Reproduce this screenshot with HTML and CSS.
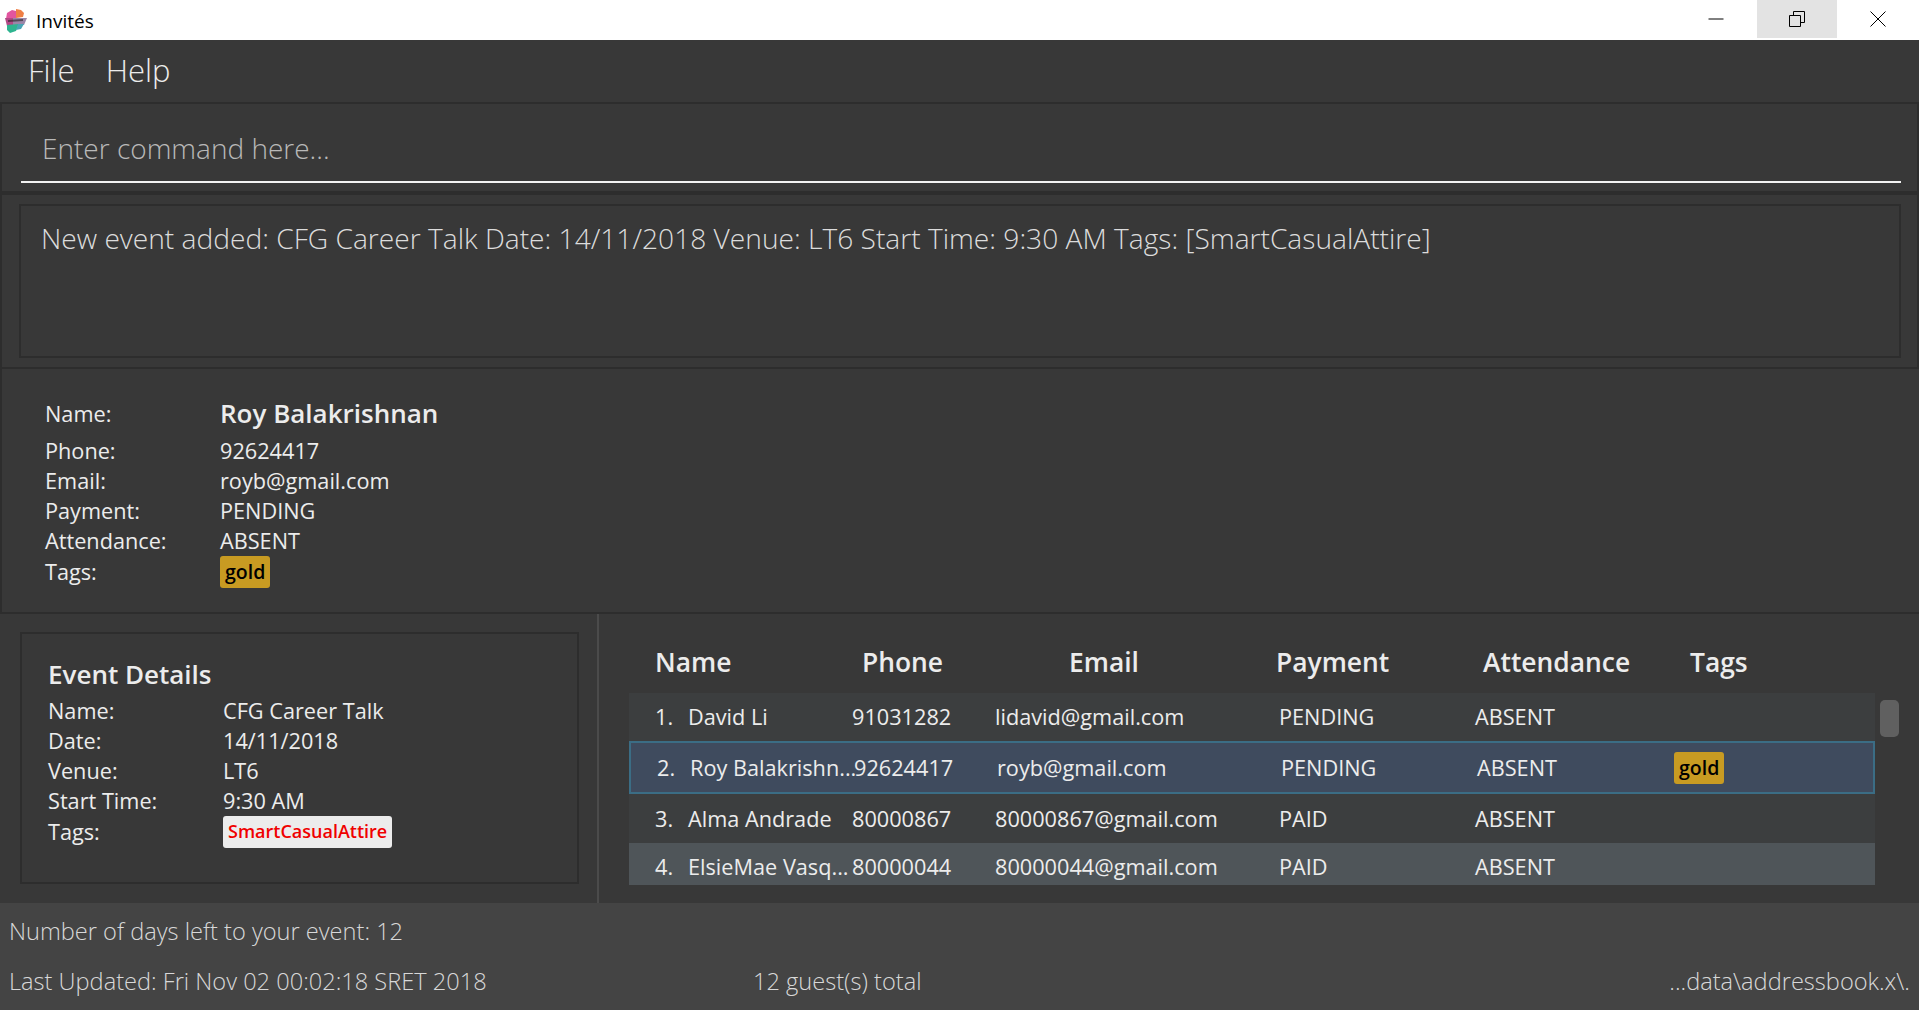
FILE: index.html
```html
<!DOCTYPE html>
<html lang="en">
<head>
    <meta charset="UTF-8">
    <title>Invités</title>
    <link rel="stylesheet" href="styles.css">
</head>
<body>
    <div class="titlebar">
        <svg class="app-icon" width="24" height="26" viewBox="0 0 24 26">
            <defs><filter id="soft"><feGaussianBlur stdDeviation="0.6"/></filter></defs>
            <g filter="url(#soft)">
                <path d="M3 5 L8 2 L12 3 L12 11 L2 11 Z" fill="#e2559f"/>
                <path d="M12 1 L17 2 L20 5 L19 9 L12 10 Z" fill="#ef7f45"/>
                <path d="M1 10 L9 10 L9 18 L3 18 Z" fill="#b24a86"/>
                <path d="M9 10 L23 10 L20 17 L9 17 Z" fill="#9a86a8"/>
                <path d="M3 17 L15 16 L12 23 L6 25 L3 22 Z" fill="#2fb48f"/>
                <path d="M14 16 L20 16 L17 21 L12 22 Z" fill="#4aa5b5"/>
            </g>
            <path d="M4 12 L19 11 L19 13 L4 14 Z" fill="#2f282c" opacity="0.65"/>
        </svg>
        <span class="app-title">Invités</span>
        <div class="win-buttons">
            <div class="win-btn win-btn-min">
                <svg width="16" height="16" viewBox="0 0 16 16"><path d="M0.5 8H15.5" stroke="#000" stroke-width="1" fill="none"/></svg>
            </div>
            <div class="win-btn win-btn-hover">
                <svg width="16" height="16" viewBox="0 0 16 16"><path d="M0.5 4.5H11.5V15.5H0.5Z M4.5 4.5V0.5H15.5V11.5H11.5" stroke="#000" stroke-width="1" fill="none"/></svg>
            </div>
            <div class="win-btn win-btn-close">
                <svg width="16" height="16" viewBox="0 0 16 16"><path d="M0.5 0.5L15.5 15.5M15.5 0.5L0.5 15.5" stroke="#000" stroke-width="1" fill="none"/></svg>
            </div>
        </div>
    </div>

    <div class="menubar">
        <span>File</span>
        <span>Help</span>
    </div>

    <div class="command-panel">
        <div class="command-box">Enter command here...</div>
    </div>

    <div class="result-panel">
        <div class="result-box">New event added: CFG Career Talk Date: 14/11/2018 Venue: LT6 Start Time: 9:30 AM Tags: [SmartCasualAttire]</div>
    </div>

    <div class="person-panel">
        <div class="detail-row name-row"><span class="label">Name:</span><span class="person-name">Roy Balakrishnan</span></div>
        <div class="detail-row"><span class="label">Phone:</span><span>92624417</span></div>
        <div class="detail-row"><span class="label">Email:</span><span>royb@gmail.com</span></div>
        <div class="detail-row"><span class="label">Payment:</span><span>PENDING</span></div>
        <div class="detail-row"><span class="label">Attendance:</span><span>ABSENT</span></div>
        <div class="detail-row tags-row"><span class="label">Tags:</span><span class="tag tag-gold">gold</span></div>
    </div>

    <div class="lower">
        <div class="event-col">
            <div class="event-box">
                <h3>Event Details</h3>
                <div class="detail-row"><span class="label">Name:</span><span>CFG Career Talk</span></div>
                <div class="detail-row"><span class="label">Date:</span><span>14/11/2018</span></div>
                <div class="detail-row"><span class="label">Venue:</span><span>LT6</span></div>
                <div class="detail-row"><span class="label">Start Time:</span><span>9:30 AM</span></div>
                <div class="detail-row tags-row"><span class="label">Tags:</span><span class="tag tag-white">SmartCasualAttire</span></div>
            </div>
        </div>

        <div class="guest-col">
            <div class="guest-head">
                <span>Name</span><span>Phone</span><span>Email</span><span>Payment</span><span>Attendance</span><span>Tags</span>
            </div>
            <div class="guest-list">
                <div class="guest-row row-1">
                    <span>1.</span><span>David Li</span><span>91031282</span><span>lidavid@gmail.com</span><span>PENDING</span><span>ABSENT</span><span></span>
                </div>
                <div class="guest-row row-2 selected">
                    <span>2.</span><span>Roy Balakrishn...</span><span>92624417</span><span>royb@gmail.com</span><span>PENDING</span><span>ABSENT</span><span class="tag tag-gold">gold</span>
                </div>
                <div class="guest-row row-3">
                    <span>3.</span><span>Alma Andrade</span><span>80000867</span><span>80000867@gmail.com</span><span>PAID</span><span>ABSENT</span><span></span>
                </div>
                <div class="guest-row row-4 hovered">
                    <span>4.</span><span>ElsieMae Vasq...</span><span>80000044</span><span>80000044@gmail.com</span><span>PAID</span><span>ABSENT</span><span></span>
                </div>
            </div>
            <div class="scroll-thumb"></div>
        </div>
    </div>

    <div class="statusbar">
        <div class="status-line">Number of days left to your event: 12</div>
        <div class="status-line status-bottom">
            <span>Last Updated: Fri Nov 02 00:02:18 SRET 2018</span>
            <span>12 guest(s) total</span>
            <span>...data\addressbook.x\.</span>
        </div>
    </div>
</body>
</html>
```

FILE: styles.css
```css
* {
    box-sizing: border-box;
}
html, body {
    margin: 0;
    height: 1010px;
    overflow: hidden;
}
body {
    font-family: "Open Sans", "Noto Sans", sans-serif;
    background-color: #383838;
    color: #ececec;
}

/* window chrome */
.titlebar {
    height: 40px;
    background: #fff;
    display: flex;
    align-items: flex-start;
    color: #000;
}
.app-icon {
    margin: 8px 0 0 4px;
}
.app-title {
    margin-left: 8px;
    font-size: 19px;
    line-height: 42px;
}
.win-buttons {
    margin-left: auto;
    display: flex;
    margin-right: 2px;
}
.win-btn {
    width: 80px;
    height: 38px;
    display: flex;
    align-items: center;
    justify-content: center;
}
.win-btn-min {
    padding-right: 3px;
}
.win-btn-close {
    padding-left: 1px;
}
.win-btn-hover {
    background: #e3e3e3;
}

.menubar {
    height: 64px;
    padding-left: 28px;
    display: flex;
    gap: 31px;
    font-weight: 300;
    font-size: 31px;
    line-height: 60px;
    border-bottom: 2px solid #2d2d2d;
}

.command-panel {
    height: 91px;
    padding: 0 16px 0 19px;
    border-left: 2px solid #2d2d2d;
    border-right: 2px solid #2d2d2d;
    border-bottom: 4px solid #2d2d2d;
}
.command-box {
    height: 79px;
    border-bottom: 2px solid #f2f2f2;
    padding-left: 21px;
    font-weight: 300;
    font-size: 28px;
    line-height: 88px;
    color: #b9b9b9;
}

.result-panel {
    height: 174px;
    padding: 9px 16px 9px 17px;
    border-left: 2px solid #2d2d2d;
    border-right: 2px solid #2d2d2d;
    border-bottom: 2px solid #2d2d2d;
}
.result-box {
    height: 154px;
    border: 2px solid #2d2d2d;
    padding-left: 20px;
    font-weight: 300;
    font-size: 28.15px;
    line-height: 64px;
    color: #dcdcdc;
}

.person-panel {
    height: 245px;
    padding: 24px 0 0 43px;
    border-left: 2px solid #2d2d2d;
    border-bottom: 2px solid #2d2d2d;
}
.detail-row {
    display: flex;
    line-height: 30px;
    font-size: 21.7px;
}
.label {
    width: 175px;
    flex: none;
}
.name-row {
    line-height: 41px;
    margin-bottom: 2px;
}
.tags-row .label {
    padding-top: 1px;
}
.person-name {
    font-size: 26px;
    font-weight: 600;
}
.tag {
    display: inline-block;
    height: 32px;
    line-height: 31px;
    padding: 0 5px;
    border-radius: 3px;
    font-weight: 600;
    font-size: 19.5px;
}
.tag-gold {
    background: #c89b22;
    color: #000;
}
.tag-white {
    background: #ececec;
    color: #f00000;
    font-size: 18px;
}

.lower {
    height: 289px;
    display: flex;
}
.event-col {
    width: 599px;
    padding: 18px 18px 0 20px;
    border-right: 2px solid #4b4b4b;
}
.event-box {
    height: 252px;
    border: 2px solid #2d2d2d;
    padding: 22px 0 0 26px;
}
.event-box h3 {
    margin: 0 0 4px;
    font-size: 26px;
    font-weight: 600;
    line-height: 36px;
}

.guest-col {
    position: relative;
    flex: 1;
    padding: 0 0 0 30px;
}
.guest-head {
    height: 79px;
    padding: 28px 0 0 26px;
    display: grid;
    grid-template-columns: repeat(6, 207px);
    font-size: 26.4px;
    font-weight: 600;
    line-height: 40px;
}
.guest-list {
    width: 1246px;
    height: 192px;
    overflow: hidden;
}
.guest-row {
    display: grid;
    grid-template-columns: 33px 164px 143px 284px 196px 197px 1fr;
    padding-left: 26px;
    font-size: 21.7px;
    line-height: 30px;
    white-space: nowrap;
    align-items: center;
    background: #3c3e3f;
}
.guest-row .tag {
    justify-self: start;
    line-height: 31px;
}
.row-1 { height: 48px; }
.row-2 { height: 53px; }
.row-3 { height: 49px; }
.row-4 { height: 48px; padding-bottom: 1px; }
.selected {
    background: #3f4b5e;
    border: 2px solid #3b6d85;
}
.hovered {
    background: #4f5559;
}
.scroll-thumb {
    position: absolute;
    left: 1281px;
    top: 86px;
    width: 19px;
    height: 37px;
    background: #606060;
    border-radius: 5px;
}

.statusbar {
    height: 107px;
    background: #444;
    padding: 3px 9px 0;
    font-weight: 300;
    font-size: 23.6px;
    color: #d8d8d8;
}
.status-line {
    line-height: 50px;
}
.status-bottom {
    display: grid;
    grid-template-columns: 744px 1fr auto;
}
```
